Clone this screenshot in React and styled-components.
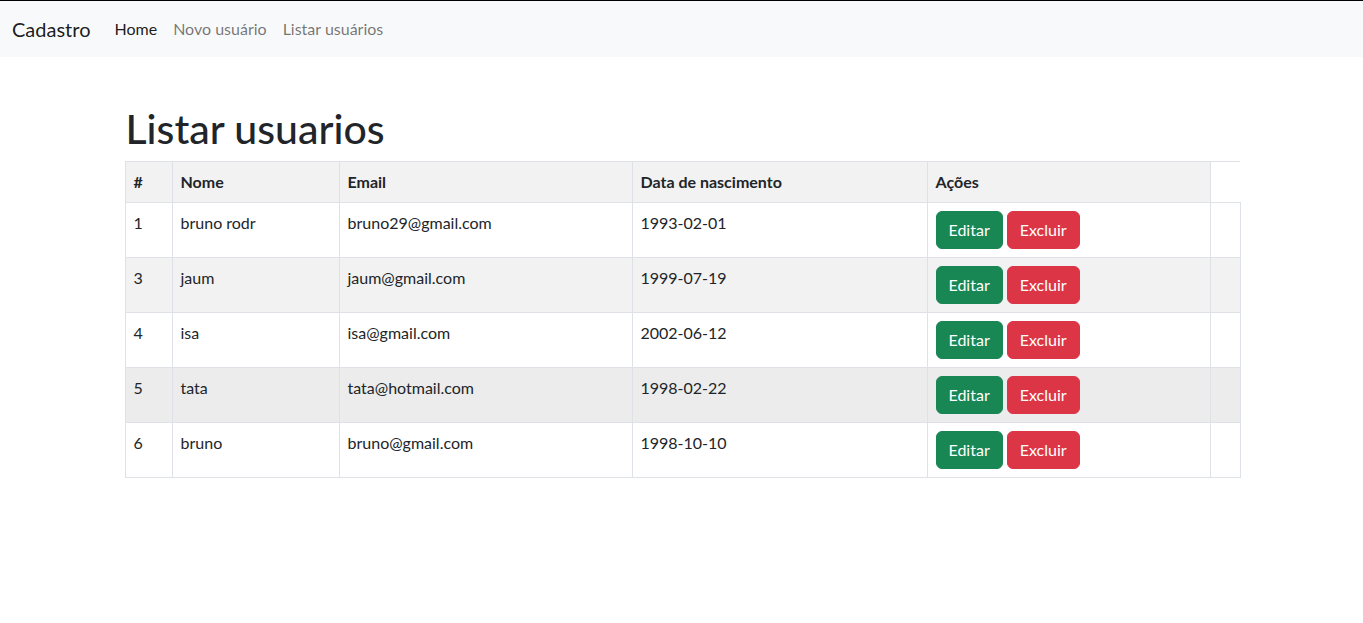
import React from "react";
import styled, { createGlobalStyle } from "styled-components";

const GlobalStyle = createGlobalStyle`
  *, *::before, *::after { box-sizing: border-box; }
  body {
    margin: 0;
    font-family: Lato, "Noto Sans", sans-serif;
    font-size: 16px;
    line-height: 1.5;
    color: #212529;
    background: #fff;
    border-top: 1px solid #000;
  }
`;

const Navbar = styled.nav`
  display: flex;
  align-items: center;
  height: 56px;
  padding: 8px 12px;
  background: #f8f9fa;
`;

const Brand = styled.a`
  font-size: 20px;
  line-height: 30px;
  margin-right: 16px;
  color: rgba(0, 0, 0, 0.9);
  text-decoration: none;
`;

const NavList = styled.div`
  display: flex;
`;

const NavLink = styled.a`
  padding: 8px;
  line-height: 24px;
  text-decoration: none;
  color: ${(p) => (p.$active ? "rgba(0,0,0,0.9)" : "rgba(0,0,0,0.55)")};
`;

const Container = styled.main`
  max-width: 1140px;
  margin: 48px auto 0;
  padding: 0 11px 0 13px;
`;

const Title = styled.h1`
  margin: 0 0 8px;
  font-size: 41px;
  font-weight: 500;
  line-height: 48px;
  padding-left: 1px;
`;

const Table = styled.table`
  width: 100%;
  border-collapse: collapse;
  table-layout: fixed;
  margin-bottom: 16px;
`;

const Row = styled.tr`
  border-top: 1px solid #dee2e6;
  border-bottom: 1px solid #dee2e6;
`;

const Cell = styled.td`
  padding: 8px;
  vertical-align: top;
  border-left: 1px solid #dee2e6;
  border-right: 1px solid #dee2e6;
  background: ${(p) => p.$bg || "#fff"};
  font-weight: ${(p) => (p.$head ? 700 : 400)};
  text-align: left;
`;

const Actions = styled.div`
  display: flex;
  gap: 4px;
`;

const Button = styled.button`
  font-family: inherit;
  font-size: 16px;
  line-height: 24px;
  padding: 6px 12px;
  border: 1px solid ${(p) => p.$color};
  border-radius: 6px;
  background: ${(p) => p.$color};
  color: #fff;
  cursor: pointer;
`;

const widths = [47, 167, 293, 295, 283, 30];
const users = [
  { id: 1, nome: "bruno rodr", email: "bruno29@gmail.com", data: "1993-02-01" },
  { id: 3, nome: "jaum", email: "jaum@gmail.com", data: "1999-07-19", bg: "#f2f2f2" },
  { id: 4, nome: "isa", email: "isa@gmail.com", data: "2002-06-12" },
  { id: 5, nome: "tata", email: "tata@hotmail.com", data: "1998-02-22", bg: "#ececec" },
  { id: 6, nome: "bruno", email: "bruno@gmail.com", data: "1998-10-10" },
];

export default function App() {
  return (
    <>
      <GlobalStyle />
      <Navbar>
        <Brand href="#">Cadastro</Brand>
        <NavList>
          <NavLink href="#" $active>Home</NavLink>
          <NavLink href="#">Novo usuário</NavLink>
          <NavLink href="#">Listar usuários</NavLink>
        </NavList>
      </Navbar>
      <Container>
        <Title>Listar usuarios</Title>
        <Table>
          <colgroup>
            {widths.map((w, i) => (
              <col key={i} style={{ width: w }} />
            ))}
          </colgroup>
          <tbody>
            <Row>
              {["#", "Nome", "Email", "Data de nascimento", "Ações"].map((h) => (
                <Cell as="th" key={h} $head $bg="#f2f2f2">{h}</Cell>
              ))}
            </Row>
            {users.map((u) => (
              <Row key={u.id}>
                <Cell $bg={u.bg}>{u.id}</Cell>
                <Cell $bg={u.bg}>{u.nome}</Cell>
                <Cell $bg={u.bg}>{u.email}</Cell>
                <Cell $bg={u.bg}>{u.data}</Cell>
                <Cell $bg={u.bg}>
                  <Actions>
                    <Button $color="#198754">Editar</Button>
                    <Button $color="#dc3545">Excluir</Button>
                  </Actions>
                </Cell>
                <Cell $bg={u.bg} />
              </Row>
            ))}
          </tbody>
        </Table>
      </Container>
    </>
  );
}
